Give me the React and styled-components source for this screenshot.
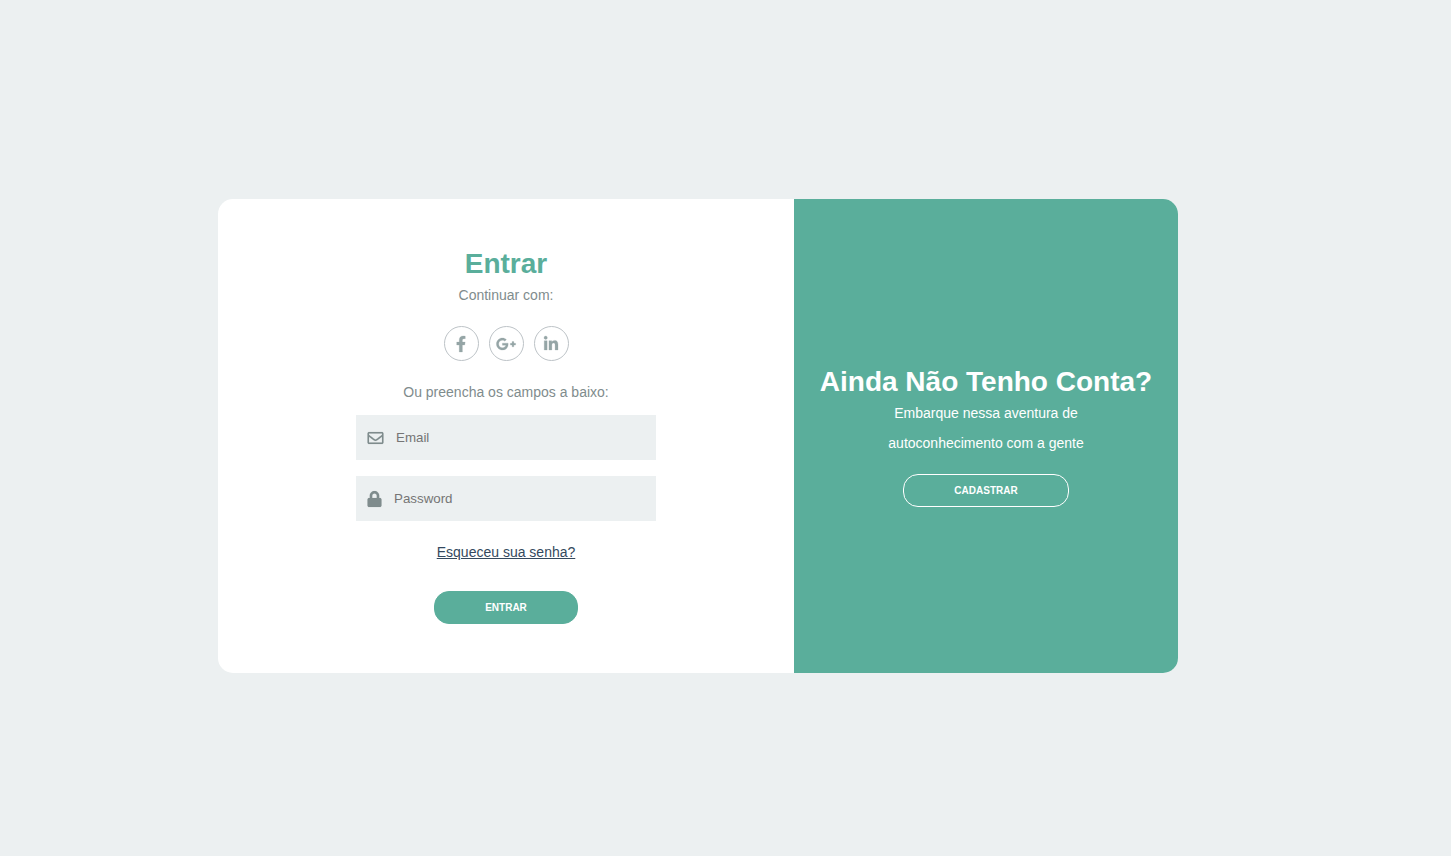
import React from "react";
import styled, { createGlobalStyle, ThemeProvider } from "styled-components";
import {
  FaFacebookF,
  FaGooglePlusG,
  FaLinkedinIn,
  FaLock,
  FaRegEnvelope,
} from "react-icons/fa";

const theme = {
  primary: "#5aae9b",
  surface: "#ecf0f1",
  text: "#7f8c8d",
  icon: "#95a5a6",
  line: "#bdc3c7",
  link: "#34495e",
};

const GlobalStyle = createGlobalStyle`
  *, *::before, *::after {
    box-sizing: border-box;
    margin: 0;
    padding: 0;
  }
  body {
    background: ${theme.surface};
    font-family: "Liberation Sans", Arial, sans-serif;
  }
`;

const Page = styled.main`
  min-height: 100vh;
  padding: 16px 55px 0 0;
  display: flex;
  align-items: center;
  justify-content: center;
`;

const Card = styled.div`
  width: 100%;
  max-width: 960px;
  display: flex;
  overflow: hidden;
  border-radius: 15px;
  background: #fff;
`;

const Column = styled.section`
  display: flex;
  flex-direction: column;
  align-items: center;
  justify-content: center;
  padding: 49px 0;
  text-align: center;
`;

const SignInColumn = styled(Column)`
  flex: 3 1 0;
`;

const SignUpColumn = styled(Column)`
  flex: 2 1 0;
  background: ${(p) => p.theme.primary};
`;

const Title = styled.h2`
  font-size: 28px;
  line-height: 32px;
  font-weight: bold;
  color: ${(p) => (p.$light ? "#fff" : p.theme.primary)};
`;

const Description = styled.p`
  font-size: 14px;
  line-height: 30px;
  color: ${(p) => (p.$light ? "#fff" : p.theme.text)};
`;

const SocialList = styled.ul`
  display: flex;
  gap: 10px;
  margin: 16px 0;
  list-style: none;
`;

const SocialLink = styled.a`
  display: flex;
  align-items: center;
  justify-content: center;
  width: 35px;
  height: 35px;
  border: 1px solid ${(p) => p.theme.line};
  border-radius: 50%;
  color: ${(p) => p.theme.icon};

  svg {
    flex: none;
    width: ${(p) => p.$iconWidth}px;
    height: 16px;
    stroke-width: 8px;
    overflow: visible;
  }
`;

const Form = styled.form`
  display: flex;
  flex-direction: column;
  align-items: center;
  gap: 16px;
  width: 300px;
  max-width: 100%;
  margin-top: 8px;
`;

const Field = styled.label`
  display: flex;
  align-items: center;
  gap: 12px;
  width: 100%;
  height: 45px;
  padding: 0 11px;
  background: ${(p) => p.theme.surface};
  color: ${(p) => p.theme.text};

  svg {
    flex: none;
    width: ${(p) => p.$iconWidth}px;
    height: 16px;
    stroke-width: 4px;
    overflow: visible;
  }
`;

const Input = styled.input`
  flex: 1;
  min-width: 0;
  height: 45px;
  border: 0;
  outline: 0;
  background: transparent;
  font-family: inherit;

  &::placeholder {
    color: #757575;
  }
`;

const ForgotLink = styled.a`
  margin-bottom: 8px;
  font-size: 14px;
  line-height: 30px;
  color: ${(p) => p.theme.link};
`;

const Button = styled.button`
  height: 33px;
  padding: 0 50px;
  border: 1px solid ${(p) => (p.$light ? "#fff" : p.theme.primary)};
  border-radius: 15px;
  background: ${(p) => p.theme.primary};
  color: #fff;
  font-family: inherit;
  font-size: 10px;
  font-weight: bold;
  text-transform: uppercase;
  cursor: pointer;
`;

const SignUpButton = styled(Button)`
  margin-top: 16px;
`;

const socials = [
  { name: "Facebook", Icon: FaFacebookF, width: 10 },
  { name: "Google Plus", Icon: FaGooglePlusG, width: 20 },
  { name: "LinkedIn", Icon: FaLinkedinIn, width: 14 },
];

export default function App() {
  return (
    <ThemeProvider theme={theme}>
      <GlobalStyle />
      <Page>
        <Card>
          <SignInColumn>
            <Title>Entrar</Title>
            <Description>Continuar com:</Description>
            <SocialList>
              {socials.map(({ name, Icon, width }) => (
                <li key={name}>
                  <SocialLink href="#" aria-label={name} $iconWidth={width}>
                    <Icon />
                  </SocialLink>
                </li>
              ))}
            </SocialList>
            <Description>Ou preencha os campos a baixo:</Description>
            <Form onSubmit={(e) => e.preventDefault()}>
              <Field htmlFor="email" $iconWidth={17}>
                <FaRegEnvelope />
                <Input id="email" type="email" placeholder="Email" aria-label="Email" />
              </Field>
              <Field htmlFor="password" $iconWidth={15}>
                <FaLock />
                <Input
                  id="password"
                  type="password"
                  placeholder="Password"
                  aria-label="Password"
                />
              </Field>
              <ForgotLink href="#">Esqueceu sua senha?</ForgotLink>
              <Button type="submit">Entrar</Button>
            </Form>
          </SignInColumn>
          <SignUpColumn>
            <Title $light>Ainda Não Tenho Conta?</Title>
            <Description $light>Embarque nessa aventura de</Description>
            <Description $light>autoconhecimento com a gente</Description>
            <SignUpButton $light type="button">
              Cadastrar
            </SignUpButton>
          </SignUpColumn>
        </Card>
      </Page>
    </ThemeProvider>
  );
}
